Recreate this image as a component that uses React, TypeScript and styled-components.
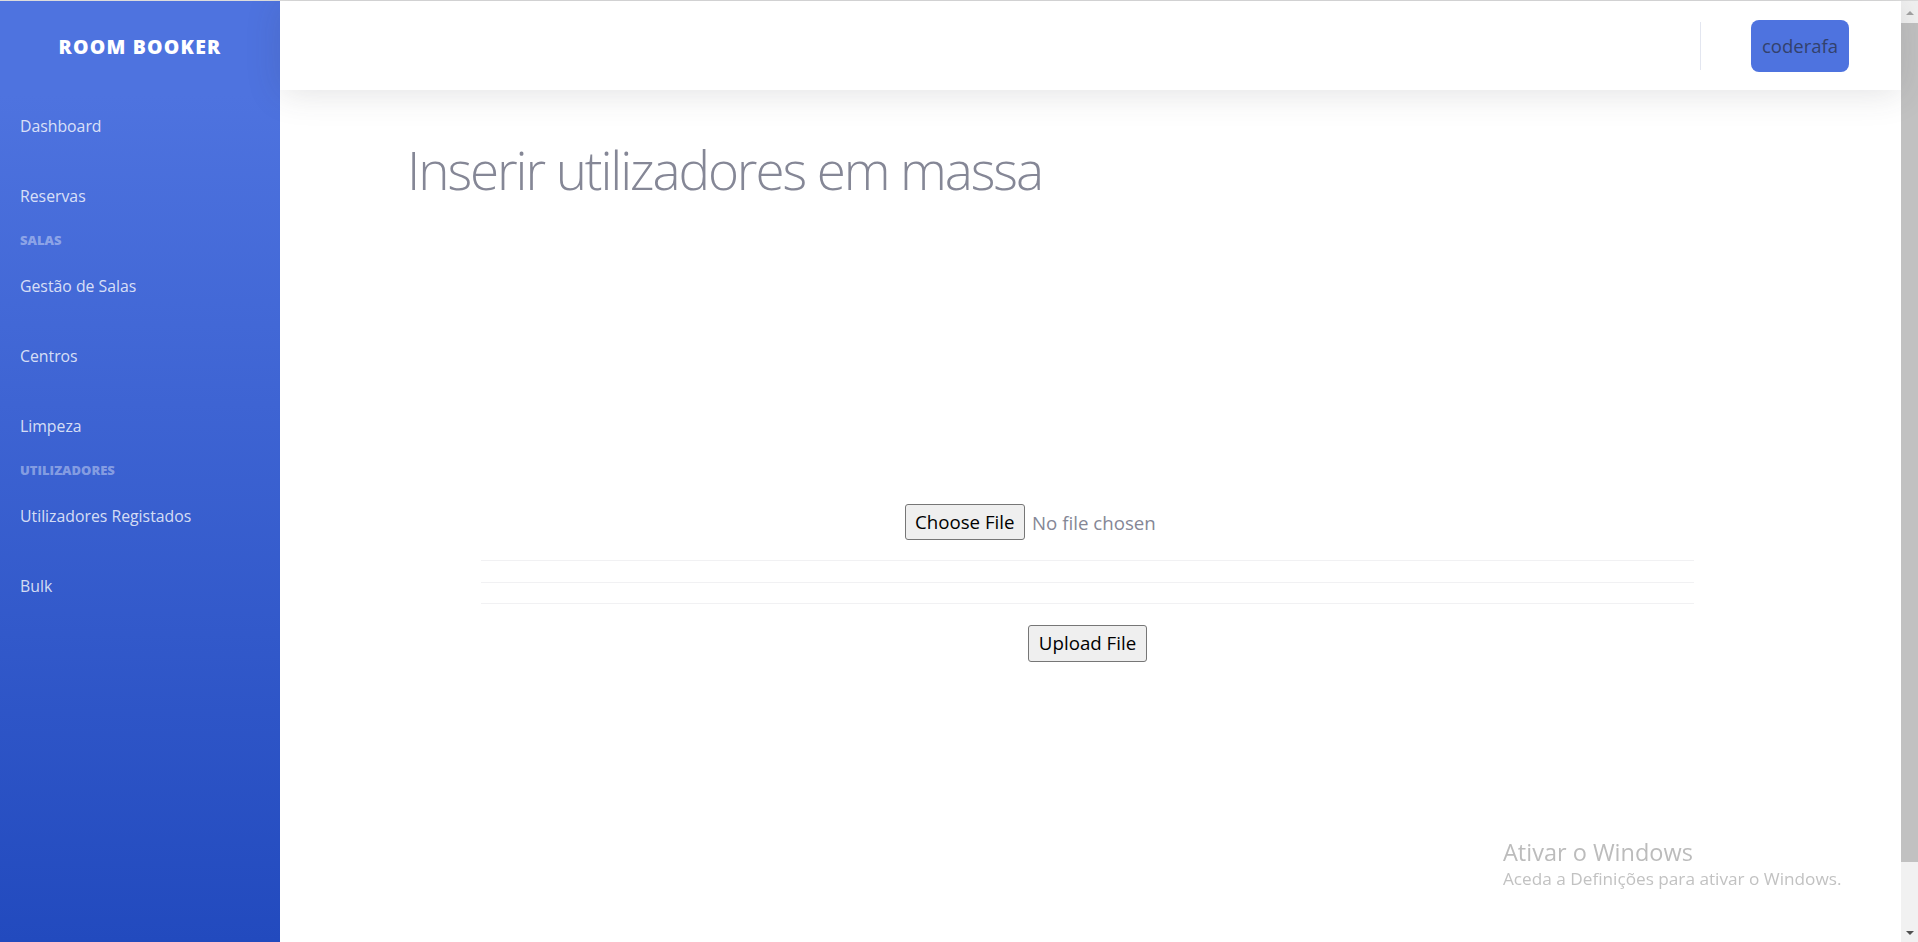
import React from "react";
import styled, { createGlobalStyle } from "styled-components";

const GlobalStyle = createGlobalStyle`
  html, body {
    margin: 0;
    padding: 0;
    height: 100%;
    overflow: hidden;
    background: #ffffff;
  }
  body {
    font-family: "Open Sans", "Noto Sans", sans-serif;
    color: #858796;
  }
  * { box-sizing: border-box; }
`;

const Page = styled.div`
  display: flex;
  height: 942px;
  border-top: 1px solid #dcdcdc;
  position: relative;
`;

const Sidebar = styled.nav`
  width: 280px;
  flex-shrink: 0;
  display: flex;
  flex-direction: column;
  background: linear-gradient(180deg, #4e73df 10%, #224abe 100%);
`;

const Brand = styled.div`
  height: 90px;
  display: flex;
  align-items: center;
  justify-content: center;
  color: #ffffff;
  font-weight: 800;
  font-size: 19.5px;
  letter-spacing: 1.2px;
  text-transform: uppercase;
`;

const NavLink = styled.a`
  height: 70px;
  display: flex;
  align-items: center;
  padding-left: 20px;
  font-size: 15.8px;
  color: rgba(255, 255, 255, 0.8);
  text-decoration: none;
`;

const SectionHeading = styled.div`
  height: 20px;
  padding: 2px 0 0 20px;
  line-height: 14px;
  font-size: 13px;
  font-weight: 800;
  text-transform: uppercase;
  color: rgba(255, 255, 255, 0.4);
`;

const Main = styled.div`
  flex: 1;
  display: flex;
  flex-direction: column;
  min-width: 0;
`;

const Topbar = styled.header`
  height: 89px;
  flex-shrink: 0;
  display: flex;
  align-items: center;
  justify-content: flex-end;
  padding-right: 52px;
  background: #ffffff;
  box-shadow: 0 3px 35px 0 rgba(58, 59, 69, 0.15);
  position: relative;
  z-index: 1;
`;

const Divider = styled.div`
  width: 1px;
  height: 48px;
  background: #e3e6f0;
  margin-right: 50px;
`;

const UserButton = styled.button`
  height: 52px;
  padding: 0 11px;
  border: none;
  border-radius: 8px;
  background: #4e73df;
  color: #33416c;
  font-family: "Open Sans", "Noto Sans", sans-serif;
  font-size: 18.5px;
`;

const Content = styled.main`
  flex: 1;
  display: flex;
  flex-direction: column;
`;

const Title = styled.h1`
  margin: 41px 0 0 127px;
  height: 77px;
  font-family: "Open Sans", "Noto Sans", sans-serif;
  font-size: 53px;
  letter-spacing: -2.1px;
  line-height: 77px;
  font-weight: 300;
  color: #858796;
  white-space: nowrap;
`;

const FormArea = styled.form`
  margin: 296px 0 0 201px;
  width: 1213px;
  display: flex;
  flex-direction: column;
  align-items: center;
`;

const FileInput = styled.div`
  width: 366px;
  height: 36px;
  display: flex;
  align-items: center;
  gap: 7px;
`;

const NativeButton = styled.button<{ $h: number }>`
  height: ${(p) => p.$h}px;
  padding: 0 9.5px;
  background: #efefef;
  border: 1px solid #767676;
  border-radius: 3px;
  color: #000000;
  font-family: "Open Sans", "Noto Sans", sans-serif;
  font-size: 18.7px;
  line-height: 1;
`;

const FileStatus = styled.span`
  font-size: 18.7px;
  color: #858796;
`;

const Rule = styled.hr<{ $top: number }>`
  align-self: stretch;
  margin: ${(p) => p.$top}px 0 0 0;
  border: none;
  border-top: 1px solid #f1f1f3;
  height: 0;
`;

const SubmitRow = styled.div`
  margin-top: 21px;
`;

const Scrollbar = styled.div`
  width: 17px;
  flex-shrink: 0;
  display: flex;
  flex-direction: column;
  background: #f1f1f1;
`;

const ScrollButton = styled.div<{ $down?: boolean }>`
  height: 21px;
  display: flex;
  align-items: center;
  justify-content: center;
  padding-top: ${(p) => (p.$down ? "2px" : "3px")};
`;

const Arrow = styled.div<{ $down?: boolean }>`
  width: 0;
  height: 0;
  border-left: 4px solid transparent;
  border-right: 4px solid transparent;
  ${(p) =>
    p.$down
      ? "border-top: 4px solid #505050;"
      : "border-bottom: 4px solid #a3a3a3;"}
`;

const Track = styled.div`
  flex: 1;
  display: flex;
  flex-direction: column;
  padding: 1px 0 59px 0;
`;

const Thumb = styled.div`
  flex: 1;
  background: #c1c1c1;
`;

const Watermark = styled.div`
  position: fixed;
  left: 1503px;
  top: 836px;
  display: flex;
  flex-direction: column;
  pointer-events: none;
  color: #bcbcbc;
`;

const WatermarkTitle = styled.span`
  font-size: 23.5px;
  line-height: 32px;
`;

const WatermarkText = styled.span`
  font-size: 17.2px;
  line-height: 22px;
  color: #c2c2c2;
`;

type NavEntry = { kind: "link" | "heading"; label: string };

const nav: NavEntry[] = [
  { kind: "link", label: "Dashboard" },
  { kind: "link", label: "Reservas" },
  { kind: "heading", label: "Salas" },
  { kind: "link", label: "Gestão de Salas" },
  { kind: "link", label: "Centros" },
  { kind: "link", label: "Limpeza" },
  { kind: "heading", label: "Utilizadores" },
  { kind: "link", label: "Utilizadores Registados" },
  { kind: "link", label: "Bulk" },
];

export default function App() {
  return (
    <>
      <GlobalStyle />
      <Page>
        <Sidebar>
          <Brand>Room Booker</Brand>
          {nav.map((item) =>
            item.kind === "link" ? (
              <NavLink key={item.label} href="#">
                {item.label}
              </NavLink>
            ) : (
              <SectionHeading key={item.label}>{item.label}</SectionHeading>
            )
          )}
        </Sidebar>
        <Main>
          <Topbar>
            <Divider />
            <UserButton>coderafa</UserButton>
          </Topbar>
          <Content>
            <Title>Inserir utilizadores em massa</Title>
            <FormArea onSubmit={(e) => e.preventDefault()}>
              <FileInput>
                <NativeButton type="button" $h={36}>
                  Choose File
                </NativeButton>
                <FileStatus>No file chosen</FileStatus>
              </FileInput>
              <Rule $top={20} />
              <Rule $top={21} />
              <Rule $top={20} />
              <SubmitRow>
                <NativeButton type="submit" $h={37}>
                  Upload File
                </NativeButton>
              </SubmitRow>
            </FormArea>
          </Content>
        </Main>
        <Scrollbar>
          <ScrollButton>
            <Arrow />
          </ScrollButton>
          <Track>
            <Thumb />
          </Track>
          <ScrollButton $down>
            <Arrow $down />
          </ScrollButton>
        </Scrollbar>
        <Watermark>
          <WatermarkTitle>Ativar o Windows</WatermarkTitle>
          <WatermarkText>Aceda a Definições para ativar o Windows.</WatermarkText>
        </Watermark>
      </Page>
    </>
  );
}
